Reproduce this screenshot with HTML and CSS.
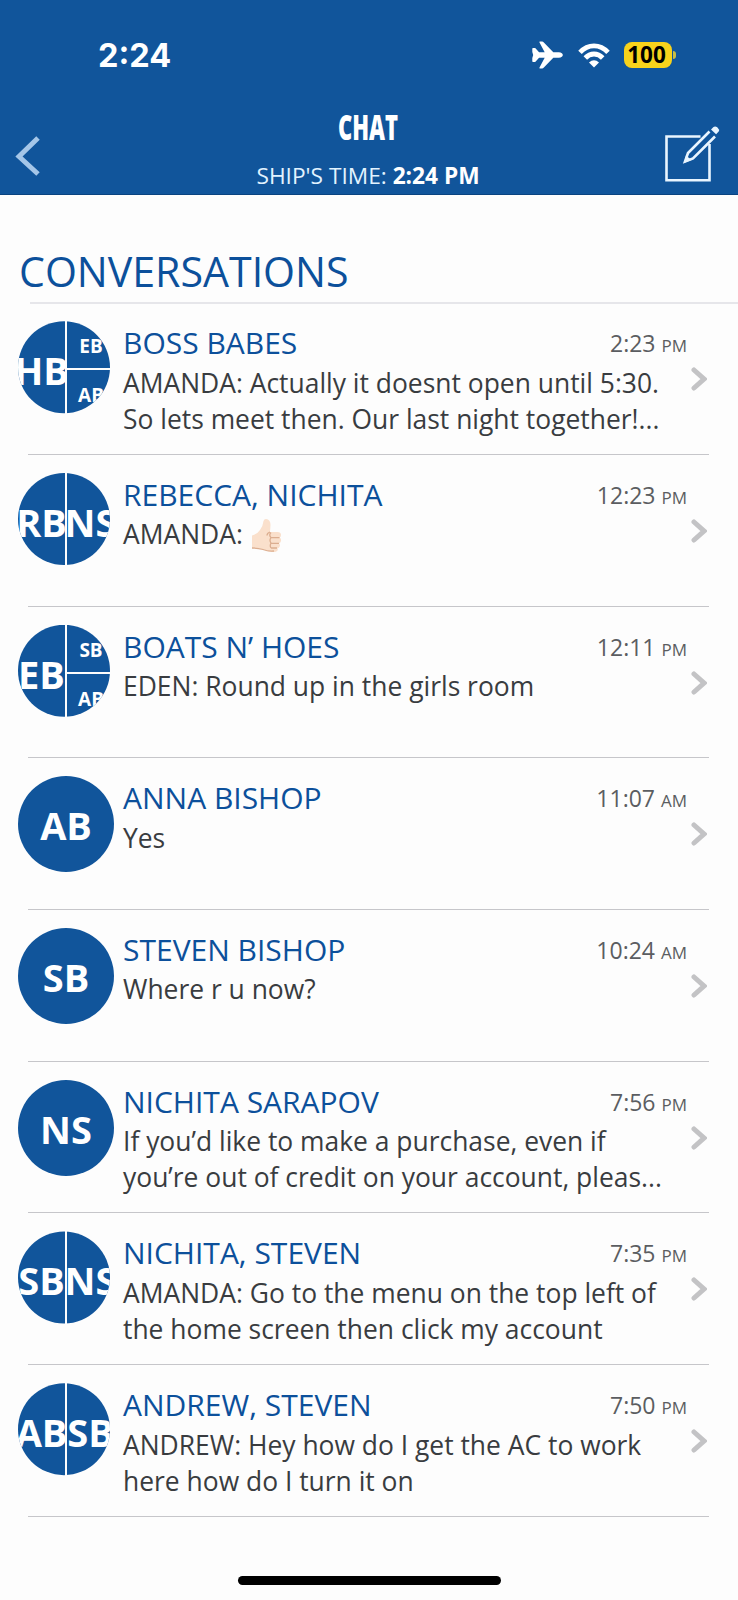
FILE: index.html
```html
<!DOCTYPE html>
<html lang="en">
<head>
  <meta charset="UTF-8">
  <meta name="viewport" content="width=device-width, initial-scale=1.0">
  <title>Chat</title>
  <link rel="stylesheet" href="styles.css">
</head>
<body>
  <header class="header">
    <div class="status-bar">
      <span class="clock">2:24</span>
      <div class="status-icons">
        <svg class="plane" width="31" height="28" viewBox="0 0 31 28">
          <path fill="#fff" d="M1 7h2.200l3.900 4.300h5.600L7.500 1.500Q7 .5 8 .5h2.200q.8 0 1.400.7l9.700 10.100h5.500q4 .4 4 2.700t-4 2.700h-5.500l-9.700 10.100q-.6.700-1.400.7H8q-1 0-.5-1l5.200-9.800H7.100L3.200 21H1q-.7 0-.7-.8V17l.9-3-.9-3V7.800Q.3 7 1 7z"/>
        </svg>
        <svg class="wifi" width="32" height="25" viewBox="0 0 32 25">
          <g fill="none" stroke="#fff" stroke-width="4.800">
            <path d="M2 9.400q6-6.500 14-6.500t14 6.500"/>
            <path d="M7.300 15q3.700-4 8.700-4t8.700 4"/>
          </g>
          <path fill="#fff" d="M11 19.600q5-4.600 10 0L16 24.500z"/>
        </svg>
        <div class="battery"><span class="battery-level">100</span></div>
      </div>
    </div>

    <div class="nav">
      <svg class="back" width="26" height="40" viewBox="0 0 26 40">
        <path d="M23 2L4 20.500L23 38" fill="none" stroke="#a5c6e8" stroke-width="5"/>
      </svg>
      <div class="nav-title">
        <h1>CHAT</h1>
        <p>SHIP'S TIME: <strong>2:24 PM</strong></p>
      </div>
      <svg class="compose" width="56" height="57" viewBox="0 0 56 57">
        <g fill="none" stroke="#e9f5ff" stroke-width="2.600">
          <path d="M36.500 11.500H2.500V55.200H45.500V19"/>
          <path d="M45.500 6.500L24 28L21 36.500L29 33.500L51 11.500"/>
        </g>
        <path fill="#e9f5ff" d="M20 38l2-7.500 5.500 4.500zM47 4.500l2.500-2.500q1.700-1.500 4 .6t1.200 4l-2.600 2.700z"/>
      </svg>
    </div>
  </header>

  <main>
    <h2 class="section-title">CONVERSATIONS</h2>

    <ul class="conversations">
      <li class="conversation">
        <div class="avatar split">
          <span class="half">HB</span>
          <div class="stack"><span>EB</span><span>AB</span></div>
        </div>
        <div class="content">
          <div class="top"><h3>BOSS BABES</h3><time>2:23 <small>PM</small></time></div>
          <p>AMANDA: Actually it doesnt open until 5:30.<br>So lets meet then. Our last night together!...</p>
        </div>
        <svg class="chevron" width="16" height="24" viewBox="0 0 16 24"><path d="M3 3l10 9-10 9"/></svg>
      </li>

      <li class="conversation">
        <div class="avatar split">
          <span class="half">RB</span>
          <span class="half">NS</span>
        </div>
        <div class="content">
          <div class="top"><h3>REBECCA, NICHITA</h3><time>12:23 <small>PM</small></time></div>
          <p>AMANDA:
            <svg class="thumb" width="32" height="34" viewBox="0 0 32 34">
              <path fill="#fae0cc" d="M2 17.500q6-2 8-5.500 3-4 3.500-9 .5-2 2.500-2 4.500.5 4.500 6l-.5 7h7.500q3.500 0 3.500 3 0 2-1.500 2.600 2 1 1.500 3.300-.4 2-2 2.300 1.500 1.300.8 3-.6 1.800-2.300 2 .8 1.500-.2 2.600-1 1.200-3.300 1.200-6 0-10-2.500Q8 30 2 30z"/>
              <path fill="none" stroke="#dcae90" stroke-width="1.300" d="M20 14q-3 1-3 3.500M21 19.700h8.500M21 25.300h8M21 30h6M21 14.500q-2.500 2.500 0 5.200-2 2.500 0 5.500-1.500 2.500 0 4.800M2 30q6 0 11 1.500 5 2 11 1.500"/>
            </svg>
          </p>
        </div>
        <svg class="chevron" width="16" height="24" viewBox="0 0 16 24"><path d="M3 3l10 9-10 9"/></svg>
      </li>

      <li class="conversation">
        <div class="avatar split">
          <span class="half">EB</span>
          <div class="stack"><span>SB</span><span>AB</span></div>
        </div>
        <div class="content">
          <div class="top"><h3>BOATS N’ HOES</h3><time>12:11 <small>PM</small></time></div>
          <p>EDEN: Round up in the girls room</p>
        </div>
        <svg class="chevron" width="16" height="24" viewBox="0 0 16 24"><path d="M3 3l10 9-10 9"/></svg>
      </li>

      <li class="conversation">
        <div class="avatar">AB</div>
        <div class="content">
          <div class="top"><h3>ANNA BISHOP</h3><time>11:07 <small>AM</small></time></div>
          <p>Yes</p>
        </div>
        <svg class="chevron" width="16" height="24" viewBox="0 0 16 24"><path d="M3 3l10 9-10 9"/></svg>
      </li>

      <li class="conversation">
        <div class="avatar">SB</div>
        <div class="content">
          <div class="top"><h3>STEVEN BISHOP</h3><time>10:24 <small>AM</small></time></div>
          <p>Where r u now?</p>
        </div>
        <svg class="chevron" width="16" height="24" viewBox="0 0 16 24"><path d="M3 3l10 9-10 9"/></svg>
      </li>

      <li class="conversation">
        <div class="avatar">NS</div>
        <div class="content">
          <div class="top"><h3>NICHITA SARAPOV</h3><time>7:56 <small>PM</small></time></div>
          <p>If you’d like to make a purchase, even if<br>you’re out of credit on your account, pleas...</p>
        </div>
        <svg class="chevron" width="16" height="24" viewBox="0 0 16 24"><path d="M3 3l10 9-10 9"/></svg>
      </li>

      <li class="conversation">
        <div class="avatar split">
          <span class="half">SB</span>
          <span class="half">NS</span>
        </div>
        <div class="content">
          <div class="top"><h3>NICHITA, STEVEN</h3><time>7:35 <small>PM</small></time></div>
          <p>AMANDA: Go to the menu on the top left of<br>the home screen then click my account</p>
        </div>
        <svg class="chevron" width="16" height="24" viewBox="0 0 16 24"><path d="M3 3l10 9-10 9"/></svg>
      </li>

      <li class="conversation">
        <div class="avatar split">
          <span class="half">AB</span>
          <span class="half">SB</span>
        </div>
        <div class="content">
          <div class="top"><h3>ANDREW, STEVEN</h3><time>7:50 <small>PM</small></time></div>
          <p>ANDREW: Hey how do I get the AC to work<br>here how do I turn it on</p>
        </div>
        <svg class="chevron" width="16" height="24" viewBox="0 0 16 24"><path d="M3 3l10 9-10 9"/></svg>
      </li>
    </ul>
  </main>

  <div class="home-indicator"></div>
</body>
</html>
```

FILE: styles.css
```css
* {
  box-sizing: border-box;
  margin: 0;
  padding: 0;
}

body {
  height: 1600px;
  display: flex;
  flex-direction: column;
  background: #fdfdfd;
  font-family: "Open Sans", sans-serif;
  overflow: hidden;
}

/* Header */
.header {
  height: 195px;
  background: #11559b;
  border-bottom: 1px solid #0a4380;
  color: #fff;
}

.status-bar {
  height: 110px;
  padding: 0 62px 0 98px;
  display: flex;
  justify-content: space-between;
  align-items: center;
}

.clock {
  font: bold 32.500px Inter, sans-serif;
}

.status-icons {
  display: flex;
  align-items: center;
}

.wifi {
  margin: 0 14px 0 15px;
}

.battery {
  display: flex;
  align-items: center;
}

.battery-level {
  width: 48px;
  height: 26px;
  padding-right: 3px;
  border-radius: 8px;
  background: #f8d31c;
  color: #000;
  font: bold 22.500px/26px "Open Sans", sans-serif;
  text-align: center;
}

.battery::after {
  content: "";
  width: 3px;
  height: 8px;
  margin-left: 1px;
  border-radius: 0 3px 3px 0;
  background: #c9bd45;
}

.nav {
  display: grid;
  grid-template-columns: 56px 1fr 56px;
  padding: 0 18px 0 15px;
}

.back {
  margin-top: 26px;
}

.nav-title {
  padding-left: 1px;
  text-align: center;
}

.nav-title h1 {
  margin-top: -1px;
  font-size: 36px;
  font-weight: 800;
  line-height: 36px;
  transform: scaleX(0.61);
}

.nav-title p {
  margin-top: 15px;
  font-size: 22.700px;
  line-height: 32px;
  color: #e2f3ff;
}

.nav-title strong {
  color: #fff;
}

.compose {
  margin-top: 15px;
}

/* Conversations */
.section-title {
  height: 109px;
  margin-left: 30px;
  padding-top: 47px;
  border-bottom: 2px solid #e6e6ea;
  color: #0c509b;
  font-size: 41.100px;
  font-weight: normal;
  line-height: 58px;
  text-indent: -11px;
}

.conversations {
  margin-top: -0.700px;
  list-style: none;
}

.conversation {
  height: 151.700px;
  display: flex;
  padding: 18px 31px 0 18px;
  background: linear-gradient(#c6c6ca, #c6c6ca) 28px 100% / 681px 1px no-repeat;
}

.avatar {
  flex: none;
  width: 96px;
  height: 96px;
  display: flex;
  justify-content: center;
  border-radius: 50%;
  background: #11559b;
  color: #fff;
  font-size: 38px;
  font-weight: bold;
  line-height: 98px;
}

.avatar.split {
  gap: 2px;
  justify-content: flex-start;
  background: none;
  clip-path: circle(46px at 46px 46px);
}

.half,
.stack {
  flex: none;
  width: 47px;
  display: flex;
  justify-content: center;
}

.half {
  background: #11559b;
}

.stack {
  flex-direction: column;
  gap: 2px;
  font-size: 19px;
  line-height: 50px;
  text-align: center;
}

.stack span {
  height: 47px;
  padding-left: 1px;
  background: #11559b;
}

.content {
  flex: 1;
  padding-left: 9px;
  white-space: nowrap;
}

.top {
  height: 43.400px;
  display: flex;
  justify-content: space-between;
  line-height: 44px;
}

.top h3 {
  color: #0c509b;
  font-size: 30px;
  font-weight: normal;
}

.top time {
  margin-right: 19px;
  color: #5b5d61;
  font-size: 23px;
  line-height: 44px;
}

.top small {
  font-size: 17px;
}

.content p {
  color: #393c40;
  font-size: 26.430px;
  line-height: 36px;
}

.thumb {
  vertical-align: -8px;
}

.chevron {
  flex: none;
  margin: 46px 0 0 -15px;
  fill: none;
  stroke: #c3c3c5;
  stroke-width: 5;
  stroke-linecap: round;
}

.home-indicator {
  width: 263px;
  height: 9px;
  margin: auto auto 15px;
  border-radius: 5px;
  background: #000;
}
```
